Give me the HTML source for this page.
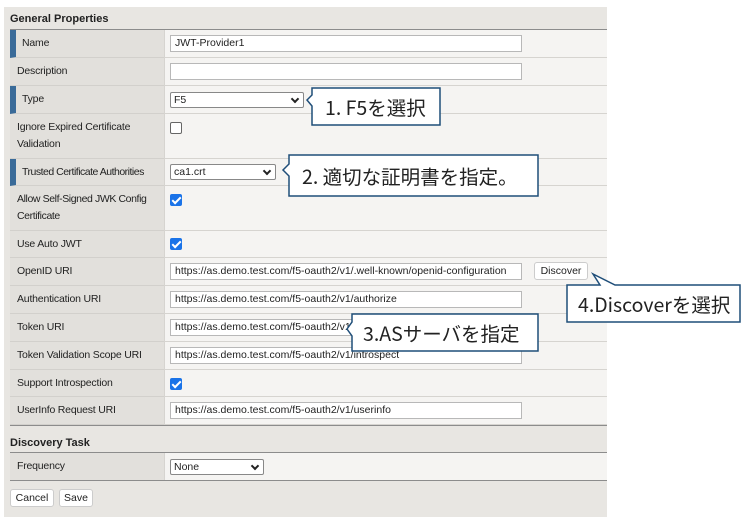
<!DOCTYPE html>
<html><head><meta charset="utf-8"><style>
*{box-sizing:border-box;margin:0;padding:0}
body{width:749px;height:523px;background:#fff;position:relative;overflow:hidden;font-family:"Liberation Sans",Arial,sans-serif;font-size:10.5px;color:#222}
.a{position:absolute}
#panel{left:4px;top:7px;width:603px;height:510px;background:#e8e6e2}
.h{font-weight:bold;font-size:11px;color:#222}
.lab{left:10px;width:154px;background:#e2e0dc;border-bottom:1px solid #d2d0cc;padding-left:7px;display:flex;align-items:center;line-height:17px;white-space:nowrap;letter-spacing:-0.2px}
.lab.req{border-left:6px solid #3a6b99;padding-left:6px}
.val{left:164px;width:443px;background:#f5f4f2;border-bottom:1px solid #d6d4d0;border-left:1px solid #d6d4d0}
.inp{position:absolute;left:5px;height:17px;width:352px;background:#fff;border:1px solid #b8b8b8;padding-left:4px;line-height:15px;font-size:10.5px;white-space:nowrap;overflow:hidden}
.sel{position:absolute;left:5px;height:16px;background:#fff;border:1px solid #888;border-radius:2px;padding-left:3px;line-height:14px;font-size:10.5px}
.sel:after{content:"";position:absolute;right:5px;top:3px;width:4px;height:4px;border-right:2px solid #222;border-bottom:2px solid #222;transform:rotate(45deg)}
.cb{position:absolute;left:5px;width:12px;height:12px;border-radius:2px}
.cb.on{background:#1a73e8}
.cb.on:after{content:"";position:absolute;left:4px;top:1px;width:3px;height:7px;border-right:2px solid #fff;border-bottom:2px solid #fff;transform:rotate(45deg)}
.cb.off{border:1px solid #666;background:#fff}
.bd{left:10px;width:597px;height:1px;background:#8c8c8c}
.btn{background:#fff;border:1px solid #ccc;border-radius:3px;font-size:10.5px;height:18px;line-height:16px;text-align:center}
.co{position:absolute;font-family:"Noto Sans CJK JP","Liberation Sans",sans-serif;font-size:19.5px;color:#222;padding-left:12px;display:flex;align-items:center;white-space:nowrap}
</style></head><body>
<div id="panel" class="a"></div>
<div class="a h" style="left:10px;top:13px">General Properties</div>
<div class="a bd" style="top:29px"></div>

<div class="a lab req" style="top:30px;height:28px">Name</div><div class="a val" style="top:30px;height:28px"><div class="inp" style="top:5px">JWT-Provider1</div></div>
<div class="a lab" style="top:58px;height:28px">Description</div><div class="a val" style="top:58px;height:28px"><div class="inp" style="top:5px"></div></div>
<div class="a lab req" style="top:86px;height:28px">Type</div><div class="a val" style="top:86px;height:28px"><div class="sel" style="top:6px;width:134px">F5</div></div>
<div class="a lab" style="top:114px;height:45px">Ignore Expired Certificate<br>Validation</div><div class="a val" style="top:114px;height:45px"><div class="cb off" style="top:8px"></div></div>
<div class="a lab req" style="top:159px;height:27px;letter-spacing:-0.5px">Trusted Certificate Authorities</div><div class="a val" style="top:159px;height:27px"><div class="sel" style="top:5px;width:106px">ca1.crt</div></div>
<div class="a lab" style="top:186px;height:45px;letter-spacing:-0.4px">Allow Self-Signed JWK Config<br>Certificate</div><div class="a val" style="top:186px;height:45px"><div class="cb on" style="top:8px"></div></div>
<div class="a lab" style="top:231px;height:27px">Use Auto JWT</div><div class="a val" style="top:231px;height:27px"><div class="cb on" style="top:7px"></div></div>
<div class="a lab" style="top:258px;height:28px">OpenID URI</div><div class="a val" style="top:258px;height:28px"><div class="inp" style="top:5px">https://as.demo.test.com/f5-oauth2/v1/.well-known/openid-configuration</div><div class="a btn" style="left:369px;top:4px;width:54px">Discover</div></div>
<div class="a lab" style="top:286px;height:28px">Authentication URI</div><div class="a val" style="top:286px;height:28px"><div class="inp" style="top:5px">https://as.demo.test.com/f5-oauth2/v1/authorize</div></div>
<div class="a lab" style="top:314px;height:28px">Token URI</div><div class="a val" style="top:314px;height:28px"><div class="inp" style="top:5px">https://as.demo.test.com/f5-oauth2/v1/token</div></div>
<div class="a lab" style="top:342px;height:28px">Token Validation Scope URI</div><div class="a val" style="top:342px;height:28px"><div class="inp" style="top:5px">https://as.demo.test.com/f5-oauth2/v1/introspect</div></div>
<div class="a lab" style="top:370px;height:27px">Support Introspection</div><div class="a val" style="top:370px;height:27px"><div class="cb on" style="top:8px"></div></div>
<div class="a lab" style="top:397px;height:28px">UserInfo Request URI</div><div class="a val" style="top:397px;height:28px"><div class="inp" style="top:5px">https://as.demo.test.com/f5-oauth2/v1/userinfo</div></div>
<div class="a bd" style="top:425px"></div>

<div class="a h" style="left:10px;top:437px">Discovery Task</div>
<div class="a bd" style="top:452px"></div>
<div class="a lab" style="top:453px;height:27px;border-bottom:none">Frequency</div><div class="a val" style="top:453px;height:27px;border-bottom:none"><div class="sel" style="top:6px;width:94px">None</div></div>
<div class="a bd" style="top:480px"></div>
<div class="a btn" style="left:10px;top:489px;width:44px">Cancel</div>
<div class="a btn" style="left:59px;top:489px;width:34px">Save</div>

<svg class="a" style="left:0;top:0" width="749" height="523">
<g fill="#fff" stroke="#1f4e79" stroke-width="1.5">
<path d="M312,88 H440 V125 H312 V106 L307,100 L312,95 Z"/>
<path d="M289,155 H538 V196 H289 V176 L283,170 L289,164 Z"/>
<path d="M352,314 H538 V351 H352 V336 L347,329 L352,322 Z"/>
<path d="M567,285 H600 L593,274 L615,285 H740 V322 H567 Z"/>
</g></svg>
<div class="co" style="left:313px;top:89px;height:35px">1. F5を選択</div>
<div class="co" style="left:290px;top:156px;height:39px">2. 適切な証明書を指定。</div>
<div class="co" style="left:353px;top:315px;height:35px;padding-left:10px">3.ASサーバを指定</div>
<div class="co" style="left:568px;top:286px;height:35px;padding-left:10px">4.Discoverを選択</div>
</body></html>
